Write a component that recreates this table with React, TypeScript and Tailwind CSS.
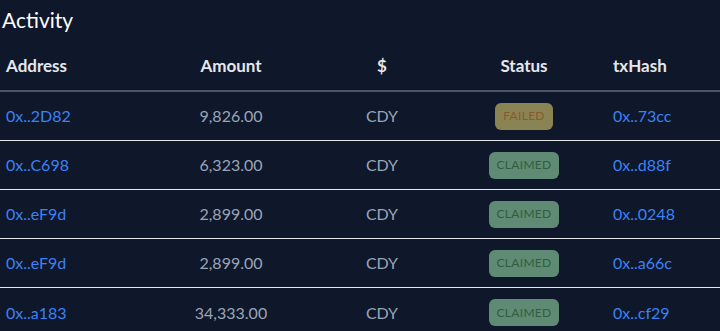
const rows = [
  { address: "0x..2D82", amount: "9,826.00", token: "CDY", status: "FAILED", tx: "0x..73cc" },
  { address: "0x..C698", amount: "6,323.00", token: "CDY", status: "CLAIMED", tx: "0x..d88f" },
  { address: "0x..eF9d", amount: "2,899.00", token: "CDY", status: "CLAIMED", tx: "0x..0248" },
  { address: "0x..eF9d", amount: "2,899.00", token: "CDY", status: "CLAIMED", tx: "0x..a66c" },
  { address: "0x..a183", amount: "34,333.00", token: "CDY", status: "CLAIMED", tx: "0x..cf29" },
];

const cols = "grid grid-cols-[139px_184px_118px_166px_1fr] items-center";

function StatusBadge({ status }: { status: string }) {
  const failed = status === "FAILED";
  return (
    <span
      className={`inline-flex h-[27px] items-center rounded-md px-2 text-[12px] tracking-wide ${
        failed ? "bg-[#8a8455] text-[#8a5a2c]" : "bg-[#5f8a73] text-[#2f5e40]"
      }`}
    >
      {status}
    </span>
  );
}

export default function App() {
  return (
    <div
      className="h-[331px] w-[720px] overflow-hidden bg-[#0f172a] text-[16px]"
      style={{ fontFamily: "Lato, 'Noto Sans', sans-serif" }}
    >
      <h2 className="h-[42px] pl-[2px] pt-[6px] text-[21px] leading-7 text-white">Activity</h2>

      <div className={`${cols} h-[50px] border-b-2 border-[#4a5568] text-[17px] font-bold text-[#e5e7eb]`}>
        <div className="px-1.5">Address</div>
        <div className="px-1.5 text-center">Amount</div>
        <div className="px-1.5 text-center">$</div>
        <div className="px-1.5 text-center">Status</div>
        <div className="px-1.5">txHash</div>
      </div>

      {rows.map((r, i) => (
        <div
          key={i}
          className={`${cols} h-[49px] border-b border-[#e5e7eb] last:border-b-0`}
        >
          <div className="px-1.5 text-[#3b82f6]">{r.address}</div>
          <div className="px-1.5 text-center text-[#9aa5b8]">{r.amount}</div>
          <div className="px-1.5 text-center text-[#9aa5b8]">{r.token}</div>
          <div className="px-1.5 text-center">
            <StatusBadge status={r.status} />
          </div>
          <div className="px-1.5 text-[#3b82f6]">{r.tx}</div>
        </div>
      ))}
    </div>
  );
}
